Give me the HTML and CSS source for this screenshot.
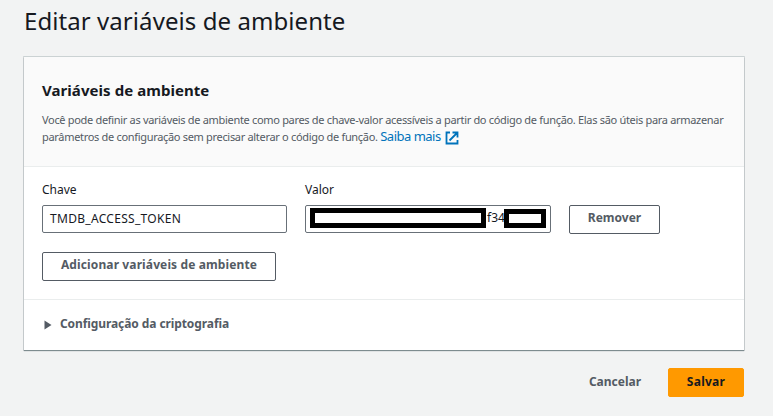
FILE: index.html
```html
<!DOCTYPE html>
<html lang="pt">
<head>
<meta charset="utf-8">
<title>Editar variáveis de ambiente</title>
<link rel="stylesheet" href="styles.css">
</head>
<body>
<main class="page">
  <h1 class="page-title">Editar variáveis de ambiente</h1>
  <section class="card">
    <header class="card-header">
      <h2 class="card-title">Variáveis de ambiente</h2>
      <p class="description">Você pode definir as variáveis de ambiente como pares de chave-valor acessíveis a partir do código de função. Elas são úteis para armazenar<br>parâmetros de configuração sem precisar alterar o código de função. <a class="link" href="#">Saiba mais<svg class="external" viewBox="0 0 14 14" fill="none" stroke="currentColor" stroke-width="1.800"><path d="M5 1.500H1.500V12.500H12.500V9M7.500 1.500H12.500V6.500M12.500 1.500L4.500 9.500"/></svg></a></p>
    </header>
    <div class="card-body">
      <div class="fields">
        <label class="field">
          <span class="label">Chave</span>
          <span class="input key">TMDB_ACCESS_TOKEN</span>
        </label>
        <label class="field">
          <span class="label">Valor</span>
          <span class="input value">
            <span class="mask mask-start"></span>
            <span class="visible-part">f34</span>
            <span class="mask mask-end"></span>
          </span>
        </label>
        <button class="button remove">Remover</button>
      </div>
      <button class="button add">Adicionar variáveis de ambiente</button>
    </div>
    <div class="expander">
      <svg class="caret" viewBox="0 0 8 10"><path d="M.5 .5L7.500 5L.5 9.500z" fill="#545b64"/></svg>
      <span>Configuração da criptografia</span>
    </div>
  </section>
  <footer class="actions">
    <button class="button cancel">Cancelar</button>
    <button class="button save">Salvar</button>
  </footer>
</main>
</body>
</html>
```
FILE: styles.css
```css
* { box-sizing: border-box; }

body {
  margin: 0;
  background: #f2f3f3;
  color: #16191f;
  font-family: "Noto Sans", "Open Sans", sans-serif;
  font-size: 12px;
}

.page { width: 720px; margin-left: 24px; }

.page-title {
  margin: 0;
  height: 57px;
  padding-top: 5px;
  font-size: 24px;
  font-weight: 400;
  line-height: 32px;
  letter-spacing: .07px;
  white-space: nowrap;
}

.card {
  height: 293px;
  background: #fff;
  box-shadow: 0 1px 1px rgba(0, 28, 36, .4), 0 0 0 1px rgba(0, 28, 36, .13), 0 -1px 0 #eaeded;
}

.card-header {
  height: 110px;
  padding: 22px 18px 0;
  background: #fafafa;
  border-bottom: 1px solid #eaeded;
}

.card-title {
  margin: 0 0 10px;
  font-size: 15px;
  font-weight: 700;
  line-height: 22px;
  letter-spacing: .06px;
}

.description {
  margin: 0;
  color: #545b64;
  font-size: 11px;
  line-height: 17px;
  letter-spacing: -.315px;
  white-space: nowrap;
}

.link {
  color: #0073bb;
  font-size: 13px;
  line-height: 16px;
  letter-spacing: -.5px;
  text-decoration: none;
}

.external { width: 14px; height: 14px; margin-left: 4px; vertical-align: -4px; }

.card-body { height: 132px; padding: 14px 18px 0; }

.fields { display: flex; align-items: flex-end; gap: 18px; height: 53px; }

.field { display: flex; flex-direction: column; }

.label { height: 24px; line-height: 18px; }

.input {
  display: flex;
  align-items: center;
  height: 28px;
  margin-bottom: 1px;
  border: 1px solid #687078;
  border-radius: 2px;
  background: #fff;
}

.key { width: 245px; padding: 0 7px 1px; letter-spacing: .3px; }

.value { align-items: flex-start; width: 246px; padding: 2px 0 0 4px; }

.mask { flex: none; border: 5px solid #000; background: #fff; }

.mask-start { width: 176px; height: 20px; }

.visible-part { width: 18px; padding-left: 1px; overflow: hidden; line-height: 20px; }

.mask-end { width: 42px; height: 19px; margin-top: 1px; }

.button {
  display: block;
  height: 29px;
  padding: 0 0 3px;
  border: 1px solid #545b64;
  border-radius: 2px;
  background: #fff;
  color: #545b64;
  font: 700 12px/18px "Noto Sans", "Open Sans", sans-serif;
  letter-spacing: 0;
  white-space: nowrap;
}

.remove { width: 91px; }

.add { width: 234px; margin-top: 18px; letter-spacing: .12px; }

.expander {
  display: flex;
  align-items: center;
  height: 51px;
  padding: 0 20px 3px;
  border-top: 1px solid #eaeded;
  color: #545b64;
  font-weight: 700;
  letter-spacing: -.09px;
}

.caret { width: 8px; height: 10px; margin: 3px 8px 0 0; }

.actions { display: flex; justify-content: flex-end; gap: 9px; padding-top: 18px; }

.cancel { width: 88px; padding-bottom: 1px; border-color: transparent; background: transparent; }

.save {
  width: 76px;
  padding-bottom: 1px;
  border-color: #ff9900;
  background: #ff9900;
  color: #16191f;
  letter-spacing: .25px;
}
```
